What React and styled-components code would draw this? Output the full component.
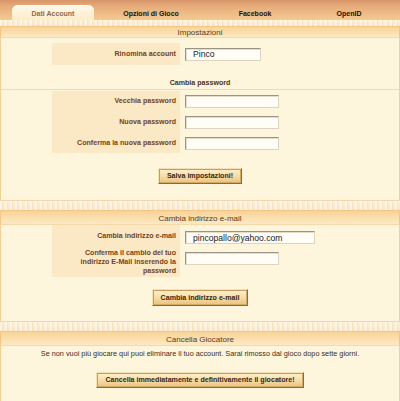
import React from "react";
import styled, { createGlobalStyle } from "styled-components";

const Global = createGlobalStyle`
  html, body { margin: 0; padding: 0; background: #fef6dc; }
  body { font-family: "Liberation Sans", Arial, sans-serif; }
  * { box-sizing: border-box; }
`;

const Page = styled.div`
  width: 400px;
  height: 401px;
  overflow: hidden;
  display: flex;
  flex-direction: column;
  background: #fef6dc;
`;

const TabBar = styled.div`
  height: 20px;
  flex: none;
  display: flex;
  padding-left: 4px;
  background: linear-gradient(#d8956a 0%, #e6ab7a 30%, #f4ca92 100%);
`;

const Tab = styled.div`
  width: ${(p) => p.$w}px;
  height: 20px;
  padding: 5px ${(p) => (p.$active ? 8 : 0)}px 0;
  display: flex;
`;

const TabFace = styled.div`
  flex: 1;
  height: 15px;
  display: flex;
  justify-content: center;
  align-items: center;
  padding-top: 1px;
  font-size: 7px;
  font-weight: bold;
  color: ${(p) => (p.$active ? "#8c6c4e" : "#1c1208")};
  border-radius: 6px 6px 0 0;
  background: ${(p) =>
    p.$active ? "linear-gradient(#fff8ea, #fdecc8)" : "transparent"};
  box-shadow: ${(p) => (p.$active ? "inset 0 1px 0 #fffdf6" : "none")};
`;

const Strip = styled.div`
  height: ${(p) => p.$h}px;
  flex: none;
  border-top: ${(p) => (p.$line ? "1px solid #f1d8ac" : "none")};
  background:
    repeating-linear-gradient(90deg, rgba(255, 255, 255, 0.45) 0 2px, rgba(238, 210, 165, 0.3) 2px 3px, rgba(255, 255, 255, 0) 3px 5px),
    linear-gradient(#fcf0da, #fae6c6);
`;

const SectionHeader = styled.div`
  height: ${(p) => p.$h}px;
  flex: none;
  border-top: 1px solid #f2c684;
  border-bottom: 1px solid #f5d9a8;
  border-left: 1px solid #f2c684;
  border-right: 1px solid #f2c684;
  background: linear-gradient(#f9d398, #fde9c4);
  display: flex;
  justify-content: center;
  align-items: center;
  padding-top: ${(p) => p.$pt || 0}px;
  font-size: 8px;
  color: #553a22;
`;

const SectionBody = styled.div`
  flex: none;
  background: #fef6dc;
  border-left: 1px solid #f5cf96;
  border-right: 1px solid #f5cf96;
  padding: ${(p) => p.$pad};
  display: flex;
  flex-direction: column;
  align-items: center;
`;

const LastBody = styled(SectionBody)`
  flex: 1;
`;

const FormGrid = styled.div`
  display: grid;
  grid-template-columns: 128px 168px;
  margin-top: ${(p) => p.$mt || 0}px;
`;

const LabelCell = styled.div`
  height: ${(p) => p.$h}px;
  background: #fbe8c5;
  display: flex;
  align-items: center;
  justify-content: flex-end;
  text-align: right;
  padding: 0 4px 0 6px;
  font-size: 7.1px;
  line-height: 9px;
  font-weight: bold;
  color: #74421a;
`;

const InputCell = styled.div`
  height: ${(p) => p.$h}px;
  display: flex;
  align-items: ${(p) => (p.$top != null ? "flex-start" : "center")};
  padding-top: ${(p) => p.$top || 0}px;
  padding-left: 5px;
`;

const TextInput = styled.input`
  width: ${(p) => p.$w}px;
  height: 13px;
  margin: 0;
  padding: 0 0 0 7px;
  border: 1px solid;
  border-color: #9c9482 #ddd3c0 #ddd3c0 #9c9482;
  box-shadow: inset 1px 1px 0 #e4ddcc;
  background: #fffdf6;
  font-family: "Liberation Sans", Arial, sans-serif;
  font-size: 8.6px;
  color: #1a1a1a;
  outline: none;
`;

const SubHeader = styled.div`
  align-self: stretch;
  height: 25px;
  border-bottom: 1px solid #f3dbb0;
  display: flex;
  justify-content: center;
  align-items: flex-end;
  padding-bottom: 1px;
  font-size: 7.1px;
  line-height: 9px;
  font-weight: bold;
  color: #4a3219;
`;

const Button = styled.button`
  height: ${(p) => p.$h}px;
  margin: ${(p) => p.$mt}px 0 0;
  padding: 0 8px;
  border: 1px solid;
  border-color: #f3e0b6 #8c683a #8c683a #f3e0b6;
  box-shadow: inset 1px 1px 0 #c89c5e, inset -1px -1px 0 #d4a964;
  background: linear-gradient(#fdf1cc, #f5daa4 55%, #e9c17e);
  font-family: "Liberation Sans", Arial, sans-serif;
  font-size: 7.1px;
  font-weight: bold;
  color: #3a2510;
  cursor: pointer;
`;

const Note = styled.p`
  margin: 0;
  font-size: 7.3px;
  line-height: 9px;
  color: #3a2c20;
`;

export default function App() {
  return (
    <Page>
      <Global />
      <TabBar>
        <Tab $w={98} $active>
          <TabFace $active>Dati Account</TabFace>
        </Tab>
        <Tab $w={98}>
          <TabFace>Opzioni di Gioco</TabFace>
        </Tab>
        <Tab $w={110}>
          <TabFace>Facebook</TabFace>
        </Tab>
        <Tab $w={78}>
          <TabFace>OpenID</TabFace>
        </Tab>
      </TabBar>

      <Strip $h={6} />
      <SectionHeader $h={12}>Impostazioni</SectionHeader>
      <SectionBody $pad="5px 0 16px">
        <FormGrid>
          <LabelCell $h={22}>Rinomina account</LabelCell>
          <InputCell $h={22}>
            <TextInput $w={76} defaultValue="Pinco" />
          </InputCell>
        </FormGrid>
        <SubHeader>Cambia password</SubHeader>
        <FormGrid $mt={1}>
          <LabelCell $h={21}>Vecchia password</LabelCell>
          <InputCell $h={21}>
            <TextInput $w={94} type="password" />
          </InputCell>
          <LabelCell $h={21}>Nuova password</LabelCell>
          <InputCell $h={21}>
            <TextInput $w={94} type="password" />
          </InputCell>
          <LabelCell $h={20}>Conferma la nuova password</LabelCell>
          <InputCell $h={20}>
            <TextInput $w={94} type="password" />
          </InputCell>
        </FormGrid>
        <Button $h={16} $mt={15}>Salva impostazioni!</Button>
      </SectionBody>

      <Strip $h={10} $line />
      <SectionHeader $h={15} $pt={2}>Cambia indirizzo e-mail</SectionHeader>
      <SectionBody $pad="0 0 15px">
        <FormGrid>
          <LabelCell $h={22}>Cambia indirizzo e-mail</LabelCell>
          <InputCell $h={22} $top={6}>
            <TextInput $w={130} defaultValue="pincopallo@yahoo.com" />
          </InputCell>
          <LabelCell $h={30}>
            Conferma il cambio del tuo indirizzo E-Mail inserendo la password
          </LabelCell>
          <InputCell $h={30} $top={5}>
            <TextInput $w={94} type="password" />
          </InputCell>
        </FormGrid>
        <Button $h={17} $mt={12}>Cambia indirizzo e-mail</Button>
      </SectionBody>

      <Strip $h={10} $line />
      <SectionHeader $h={15} $pt={2}>Cancella Giocatore</SectionHeader>
      <LastBody $pad="3px 0 0">
        <Note>
          Se non vuoi più giocare qui puoi eliminare il tuo account. Sarai rimosso dal gioco dopo sette giorni.
        </Note>
        <Button $h={16} $mt={14}>
          Cancella immediatamente e definitivamente il giocatore!
        </Button>
      </LastBody>
    </Page>
  );
}
